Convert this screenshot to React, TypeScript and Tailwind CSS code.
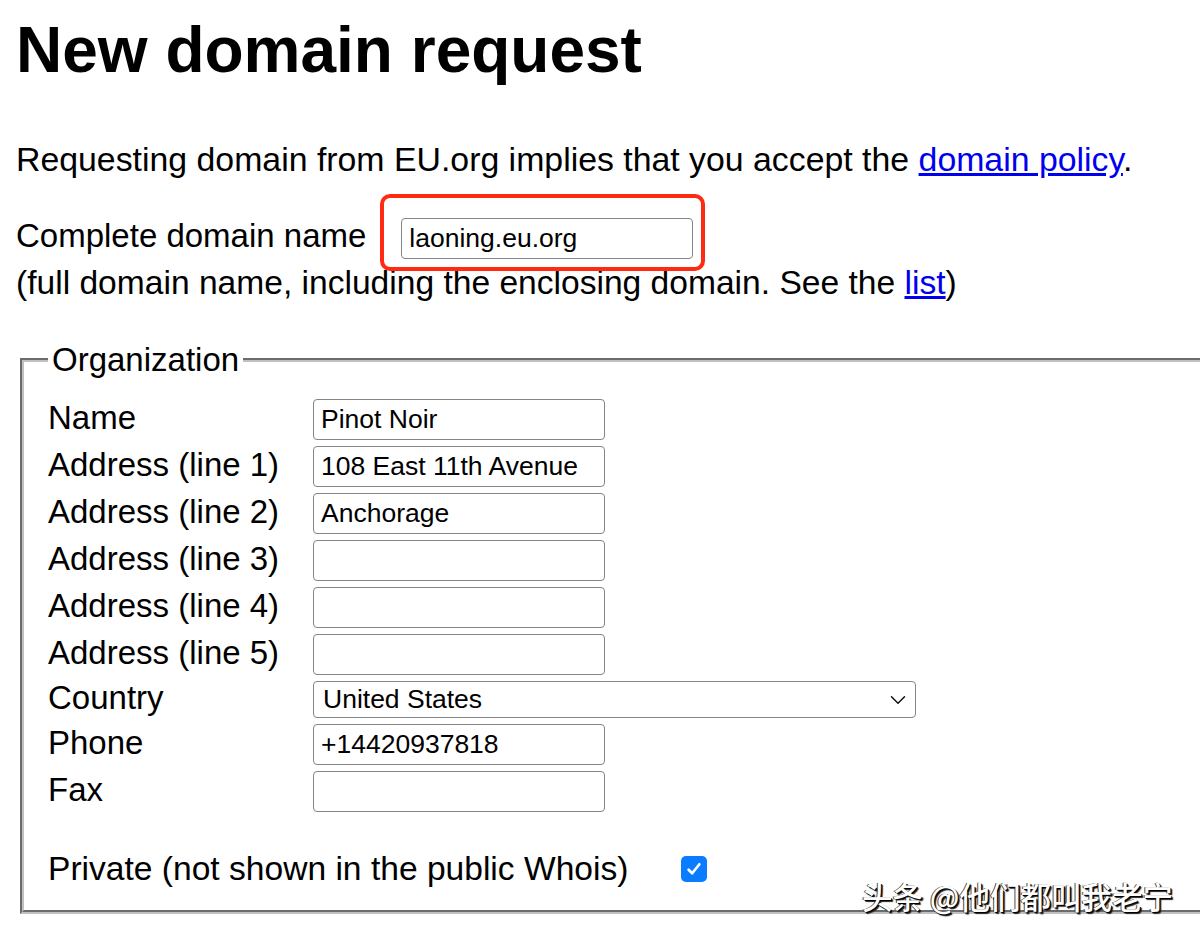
type Row =
  | { kind: "text"; label: string; value: string }
  | { kind: "select"; label: string; value: string };

const rows: Row[] = [
  { kind: "text", label: "Name", value: "Pinot Noir" },
  { kind: "text", label: "Address (line 1)", value: "108 East 11th Avenue" },
  { kind: "text", label: "Address (line 2)", value: "Anchorage" },
  { kind: "text", label: "Address (line 3)", value: "" },
  { kind: "text", label: "Address (line 4)", value: "" },
  { kind: "text", label: "Address (line 5)", value: "" },
  { kind: "select", label: "Country", value: "United States" },
  { kind: "text", label: "Phone", value: "+14420937818" },
  { kind: "text", label: "Fax", value: "" },
];

function TextField({ value }: { value: string }) {
  return (
    <input
      readOnly
      value={value}
      className="block h-[41px] w-[292px] rounded-[4px] border border-[#858585] bg-white px-[7px] font-['Liberation_Sans',Arial,sans-serif] text-[26.5px] text-black outline-none"
    />
  );
}

function SelectField({ value }: { value: string }) {
  return (
    <div className="flex h-[37px] w-[603px] items-center justify-between rounded-[4px] border border-[#858585] bg-white pl-[9px] pr-[9px] text-[26.5px]">
      <span>{value}</span>
      <svg viewBox="0 0 16 10" className="h-[10px] w-[16px]">
        <path d="M1.5 1.8 L8 8.2 L14.5 1.8" fill="none" stroke="#111" strokeWidth="1.5" strokeLinecap="round" strokeLinejoin="round" />
      </svg>
    </div>
  );
}

export default function App() {
  return (
    <div className="relative h-[940px] w-[1200px] overflow-hidden bg-white pl-4 font-['Liberation_Sans',Arial,sans-serif] text-[33px] text-black">
      <h1 className="mt-[18px] text-[64px] font-bold leading-[64px]">New domain request</h1>

      <p className="mt-[57px] text-[33.85px] leading-[40px]">
        Requesting domain from EU.org implies that you accept the{" "}
        <a className="text-[#0000ee] underline">domain policy</a>.
      </p>

      <div className="mt-[39px] flex items-center">
        <span className="mb-[6px] leading-[33px]">Complete domain name</span>
        <span className="relative ml-[35px]">
          <TextField value="laoning.eu.org" />
          {/* annotation box drawn over the field */}
          <span className="absolute -bottom-[12px] -left-[21px] -right-[12px] -top-[24px] rounded-[10px] border-4 border-[#ff2a12]" />
        </span>
      </div>
      <p className="mt-[5px] text-[33.6px] leading-[37px]">
        (full domain name, including the enclosing domain. See the{" "}
        <a className="text-[#0000ee] underline">list</a>)
      </p>

      <fieldset className="ml-1 mt-[40px] w-[1260px] border-4 border-[#c0c0c0] px-6 pb-[23px] pt-[21px] [border-style:groove]">
        <legend className="px-1 leading-[37px]">Organization</legend>

        <div className="grid grid-cols-[265px_auto] items-center justify-items-start gap-y-[6px]">
          {rows.map((row) => (
            <div key={row.label} className="contents">
              <span className="mb-[4px] leading-[33px]">{row.label}</span>
              {row.kind === "text" ? <TextField value={row.value} /> : <SelectField value={row.value} />}
            </div>
          ))}
        </div>

        <div className="mt-[38px] flex items-center">
          <span className="w-[633px] text-[33.6px] leading-[37px]">Private (not shown in the public Whois)</span>
          <span className="flex h-[26px] w-[26px] items-center justify-center rounded-[5px] bg-[#0a7cff]">
            <svg viewBox="0 0 16 16" className="h-[18px] w-[18px]">
              <path d="M3.2 8.6 L6.4 11.8 L12.8 3.8" fill="none" stroke="white" strokeWidth="2.4" strokeLinecap="round" strokeLinejoin="round" />
            </svg>
          </span>
        </div>
      </fieldset>

      {/* watermark */}
      <div className="absolute left-[862px] top-[879px] font-['Noto_Sans_CJK_SC',sans-serif] text-[30.5px] font-medium leading-[34px] text-white [text-shadow:1px_1px_0_#000,2px_2px_1px_#222,-1px_0_0_#444]">
        头条 @他们都叫我老宁
      </div>
    </div>
  );
}
